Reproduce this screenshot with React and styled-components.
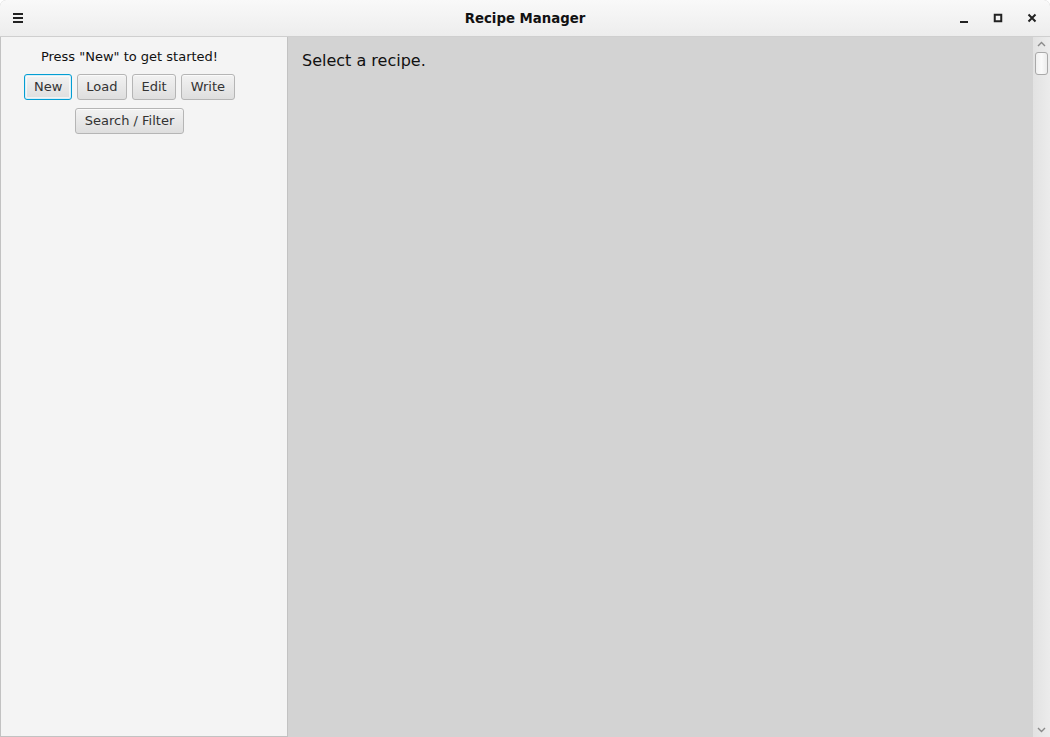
import React from 'react';
import styled, { createGlobalStyle } from 'styled-components';

const GlobalStyle = createGlobalStyle`
	html, body {
		margin: 0;
		padding: 0;
		background: #ffffff;
	}
	body {
		font-family: 'DejaVu Sans', 'Liberation Sans', sans-serif;
	}
`;

const Window = styled.div`
	width: 1050px;
	height: 737px;
	display: flex;
	flex-direction: column;
	overflow: hidden;
	border-radius: 6px 6px 0 0;
	background: #d3d3d3;
`;

const TitleBar = styled.div`
	height: 36px;
	flex: 0 0 36px;
	display: grid;
	grid-template-columns: 1fr auto 1fr;
	align-items: center;
	padding: 0 12px;
	background: linear-gradient(#f9f9f9, #ededed);
	border-bottom: 1px solid #cfcfcf;
	border-radius: 6px 6px 0 0;
`;

const TitleGroup = styled.div`
	display: flex;
	align-items: center;
	justify-content: ${({ end }) => (end ? 'flex-end' : 'flex-start')};
`;

const Title = styled.div`
	text-align: center;
	font-weight: bold;
	font-size: 13.3px;
	color: #111;
`;

const IconButton = styled.div`
	width: 12px;
	height: 12px;
	display: flex;
	align-items: center;
	justify-content: center;
	margin-left: ${({ gap }) => gap || 0}px;
	svg {
		display: block;
	}
`;

const Body = styled.div`
	flex: 1;
	display: flex;
	min-height: 0;
`;

const SidePanel = styled.div`
	box-sizing: border-box;
	flex: 0 0 288px;
	background: #f4f4f4;
	border: 1px solid #c2c2c2;
	border-top: none;
	display: flex;
	flex-direction: column;
	align-items: center;
	padding: 12px 29px 0 0;
	gap: 8px;
`;

const Hint = styled.div`
	font-size: 13px;
	color: #111;
	line-height: 16px;
	margin-bottom: 1px;
`;

const ButtonRow = styled.div`
	display: flex;
	gap: 5px;
	justify-content: center;
`;

const Button = styled.button`
	font-family: 'DejaVu Sans', 'Liberation Sans', sans-serif;
	font-size: 13px;
	color: #333;
	height: 26px;
	padding: 0 8.5px;
	border-radius: 3px;
	border: 1px solid ${({ focused }) => (focused ? '#039ed3' : '#b5b5b5')};
	background: linear-gradient(#f2f2f2, #dedede);
	box-shadow: ${({ focused }) =>
		focused ? 'inset 0 0 0 1px #d8eef7, inset 0 0 0 2px rgba(255,255,255,0.6)' : 'inset 0 1px 0 #fafafa'};
	cursor: default;
	line-height: 24px;
`;

const Content = styled.div`
	flex: 1;
	display: flex;
	background: #d3d3d3;
	min-width: 0;
`;

const ContentInner = styled.div`
	flex: 1;
	padding: 14px 14px;
	font-size: 16px;
	color: #111;
	line-height: 20px;
`;

const ScrollBar = styled.div`
	width: 17px;
	flex: 0 0 17px;
	background: linear-gradient(90deg, #e2e2e2, #ececec);
	display: flex;
	flex-direction: column;
	align-items: center;
`;

const Arrow = styled.div`
	height: 14px;
	display: flex;
	align-items: center;
	justify-content: center;
`;

const Thumb = styled.div`
	width: 11px;
	height: 21px;
	margin-top: 1px;
	border: 1px solid #a9a9a9;
	border-radius: 3px;
	background: linear-gradient(90deg, #f0f0f0, #fafafa, #ececec);
`;

const Track = styled.div`
	flex: 1;
`;

export default function App() {
	return (
		<>
			<GlobalStyle />
			<Window>
				<TitleBar>
					<TitleGroup>
						<IconButton>
							<svg width="12" height="10" viewBox="0 0 12 10">
								<rect x="1" y="0" width="10" height="2" fill="#222" />
								<rect x="1" y="4" width="10" height="2" fill="#222" />
								<rect x="1" y="8" width="10" height="2" fill="#222" />
							</svg>
						</IconButton>
					</TitleGroup>
					<Title>Recipe Manager</Title>
					<TitleGroup end>
						<IconButton>
							<svg width="10" height="12" viewBox="0 0 10 12">
								<rect x="1" y="9" width="8" height="2" fill="#222" />
							</svg>
						</IconButton>
						<IconButton gap={22}>
							<svg width="10" height="10" viewBox="0 0 10 10">
								<rect x="1.75" y="1.75" width="6.5" height="6.5" fill="none" stroke="#222" strokeWidth="2" />
							</svg>
						</IconButton>
						<IconButton gap={22}>
							<svg width="10" height="10" viewBox="0 0 10 10">
								<path d="M1.5 1.5 L8.5 8.5 M8.5 1.5 L1.5 8.5" stroke="#222" strokeWidth="2" />
							</svg>
						</IconButton>
					</TitleGroup>
				</TitleBar>
				<Body>
					<SidePanel>
						<Hint>Press "New" to get started!</Hint>
						<ButtonRow>
							<Button focused>New</Button>
							<Button>Load</Button>
							<Button>Edit</Button>
							<Button>Write</Button>
						</ButtonRow>
						<ButtonRow>
							<Button>Search / Filter</Button>
						</ButtonRow>
					</SidePanel>
					<Content>
						<ContentInner>Select a recipe.</ContentInner>
						<ScrollBar>
							<Arrow>
								<svg width="9" height="6" viewBox="0 0 9 6">
									<path d="M1 5 L4.5 1.5 L8 5" fill="none" stroke="#8a8a8a" strokeWidth="1.4" />
								</svg>
							</Arrow>
							<Thumb />
							<Track />
							<Arrow>
								<svg width="9" height="6" viewBox="0 0 9 6">
									<path d="M1 1 L4.5 4.5 L8 1" fill="none" stroke="#8a8a8a" strokeWidth="1.4" />
								</svg>
							</Arrow>
						</ScrollBar>
					</Content>
				</Body>
			</Window>
		</>
	);
}
